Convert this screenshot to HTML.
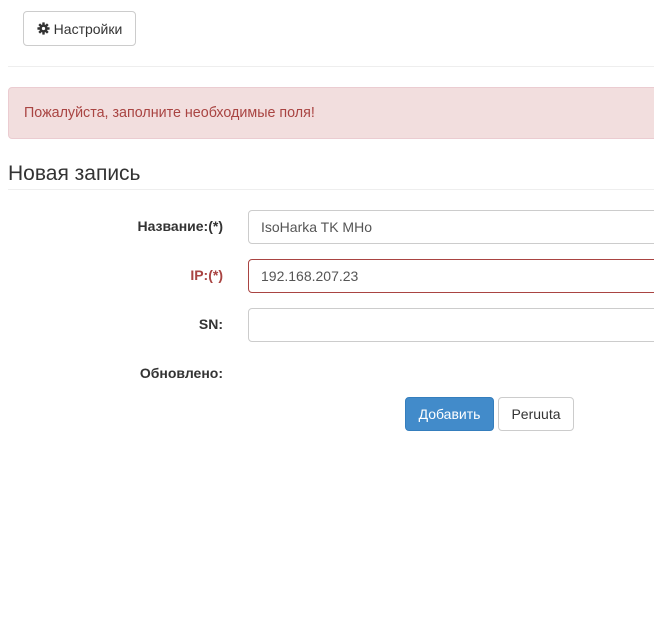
<!DOCTYPE html>
<html><head><meta charset="utf-8"><style>
*{box-sizing:border-box}
body{margin:0;width:654px;height:638px;overflow:hidden;background:#fff;font-family:"Liberation Sans",Arial,sans-serif;font-size:14px;color:#333;position:relative}
.abs{position:absolute}
.btn{position:absolute;border:1px solid #ccc;border-radius:4px;background:#fff;font-size:14px;display:flex;align-items:center;justify-content:center;color:#333}
.hr{position:absolute;left:8px;width:660px;height:1px;background:#eee}
.lbl{position:absolute;right:431px;font-weight:bold;font-size:14px;text-align:right}
.inp{position:absolute;left:248px;width:420px;height:34px;border:1px solid #ccc;border-radius:4px;padding:0 12px;display:flex;align-items:center;color:#555;font-size:14px}
</style></head><body>
<div class="btn" style="left:23px;top:11px;width:113px;height:35px">
<svg width="13" height="13" viewBox="0 0 16 16" style="margin-right:4px"><g fill="#333"><circle cx="8" cy="8" r="5"/><rect x="6.5" y="0.5" width="3" height="15" rx="0.5"/><rect x="0.5" y="6.5" width="15" height="3" rx="0.5"/><rect x="6.5" y="0.5" width="3" height="15" rx="0.5" transform="rotate(45 8 8)"/><rect x="6.5" y="0.5" width="3" height="15" rx="0.5" transform="rotate(-45 8 8)"/></g><circle cx="8" cy="8" r="2" fill="#fff"/></svg>Настройки</div>
<div class="hr" style="top:66px"></div>
<div class="abs" style="left:8px;top:87px;width:660px;height:52px;background:#f2dede;border:1px solid #ebccd1;border-radius:4px;color:#a94442;padding:0 15px;display:flex;align-items:center;font-size:14.3px">Пожалуйста, заполните необходимые поля!</div>
<div class="abs" style="left:8px;top:162px;font-size:21px;color:#333">Новая запись</div>
<div class="hr" style="top:189px"></div>
<div class="lbl" style="top:218px">Название:(*)</div>
<div class="inp" style="top:210px">IsoHarka TK MHo</div>
<div class="lbl" style="top:267px;color:#a94442">IP:(*)</div>
<div class="inp" style="top:259px;border-color:#a94442">192.168.207.23</div>
<div class="lbl" style="top:316px">SN:</div>
<div class="inp" style="top:308px"></div>
<div class="lbl" style="top:365px">Обновлено:</div>
<div class="btn" style="left:405px;top:397px;width:89px;height:34px;background:#428bca;border-color:#357ebd;color:#fff">Добавить</div>
<div class="btn" style="left:498px;top:397px;width:76px;height:34px">Peruuta</div>
</body></html>
